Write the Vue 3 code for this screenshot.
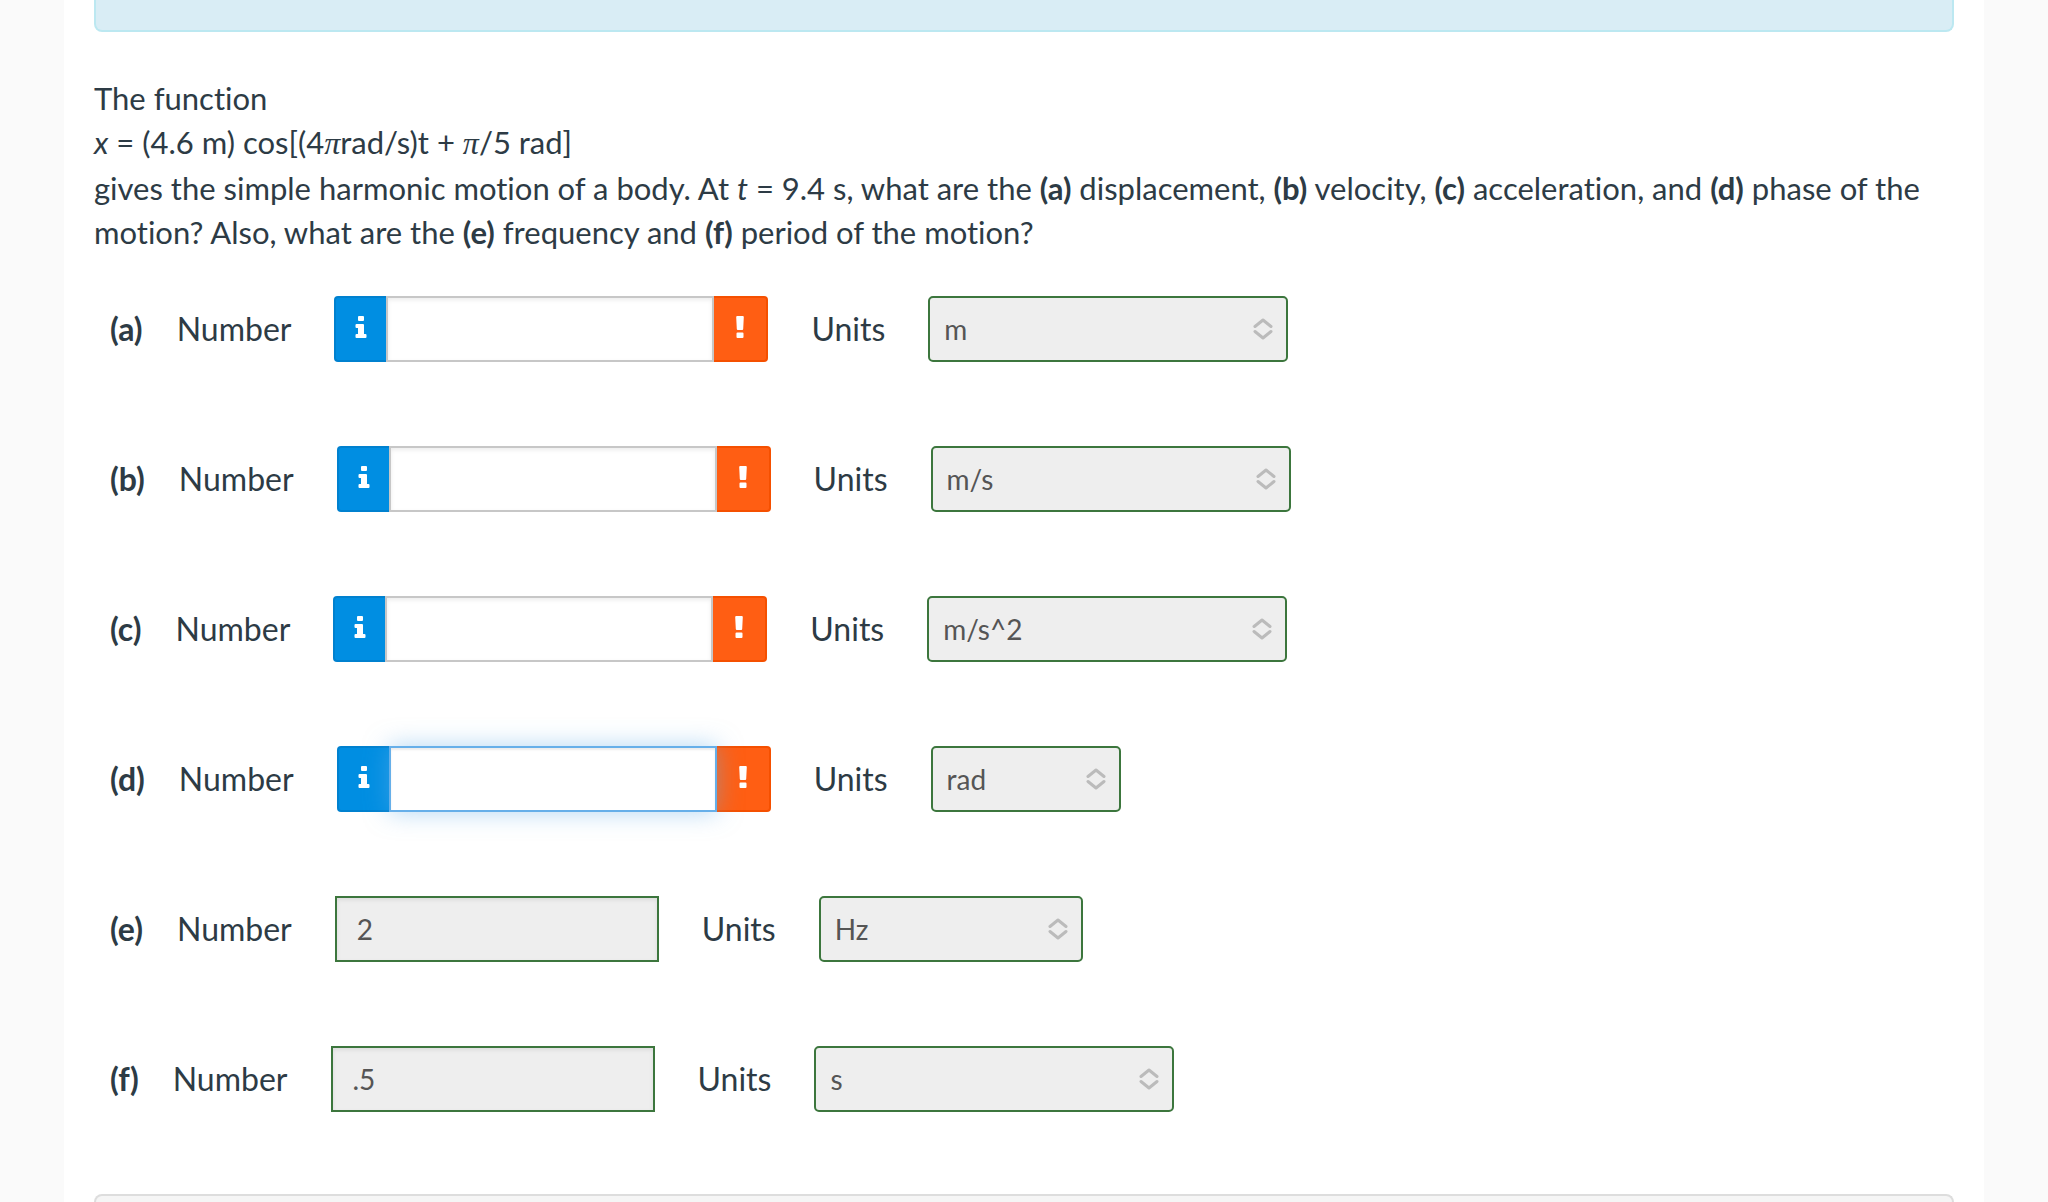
<script setup>
import { ref } from 'vue';

const rows=ref([
  { id:'a', value:'', unit:'m', size:'large', checked:false },
  { id:'b', value:'', unit:'m/s', size:'large', checked:false },
  { id:'c', value:'', unit:'m/s^2', size:'large', checked:false },
  { id:'d', value:'', unit:'rad', size:'small', checked:false },
  { id:'e', value:'2', unit:'Hz', size:'medium', checked:true },
  { id:'f', value:'.5', unit:'s', size:'large', checked:true }
])
const active=ref('d')
</script>
<template>
<main class="page">
  <div class="notice"></div>

  <section class="question">
    <p>The function</p>
    <p class="formula"><em>x</em> = (4.6 m) cos[(4<span class="pi">π</span>rad/s)t + <span class="pi">π</span>/5 rad]</p>
    <p>gives the simple harmonic motion of a body. At <em>t</em> = 9.4 s, what are the <b>(a)</b> displacement, <b>(b)</b> velocity, <b>(c)</b> acceleration, and <b>(d)</b> phase of the motion? Also, what are the <b>(e)</b> frequency and <b>(f)</b> period of the motion?</p>
  </section>

  <form class="answers" @submit.prevent>
    <div class="row" v-for="row in rows" :key="row.id">
      <b class="part">({{ row.id }})</b>
      <label :for="'number-'+row.id">Number</label>

      <input v-if="row.checked" class="number correct" type="text" :id="'number-'+row.id" v-model="row.value" disabled>
      <div v-else class="group">
        <button type="button" class="info" aria-label="Information">
          <svg width="12" height="22" viewBox="0 0 12 22">
            <path d="M4 0h4q1 0 1 1v3q0 1-1 1H4Q3 5 3 4V1q0-1 1-1zM1.500 8H8q1 0 1 1v9h1.500q1 0 1 1v2q0 1-1 1h-9q-1 0-1-1v-2q0-1 1-1H3v-6H1.500q-1 0-1-1V9q0-1 1-1z"/>
          </svg>
        </button>
        <input class="number" :class="{ active: active===row.id }" type="text" :id="'number-'+row.id" v-model="row.value" @focus="active=row.id">
        <button type="button" class="wrong" aria-label="Incorrect">
          <svg width="8" height="22" viewBox="0 0 8 22">
            <path d="M1.200 0h5.600q1 0 1 1l-.6 12q0 1-1 1H1.800q-1 0-1-1L.2 1q0-1 1-1zM1.500 16.500h5q1 0 1 1V21q0 1-1 1h-5q-1 0-1-1v-3.500q0-1 1-1z"/>
          </svg>
        </button>
      </div>

      <label :for="'units-'+row.id">Units</label>
      <div class="select" :class="row.size">
        <select :id="'units-'+row.id" v-model="row.unit" disabled>
          <option>{{ row.unit }}</option>
        </select>
        <svg class="arrows" width="20" height="22" viewBox="0 0 20 22">
          <path d="M2 8.500L10 2l8 6.500M2 13.500L10 20l8-6.500"/>
        </svg>
      </div>
    </div>
  </form>

  <div class="footer-box"></div>
</main>
</template>
<style>
body{
  margin: 0;
  background-color: #fafafa;
}
</style>
<style scoped>
.page{
  box-sizing: border-box;
  min-height: 100vh;
  margin: 0 64px;
  padding: 0 30px;
  display: flex;
  flex-direction: column;
  background-color: white;
  color: #2d3b45;
  font-family: Lato, "Liberation Sans", sans-serif;
  font-size: 32px;
  font-variant-ligatures: none;
}

.notice{
  height: 30px;
  background-color: #d9edf5;
  border: 2px solid #bce8f1;
  border-top: none;
  border-radius: 0 0 8px 8px;
}

.question{
  margin: 44px 0 42px;
  font-size: 31px;
  line-height: 44px;
}

.question p{
  margin: 0;
}

.question .formula{
  margin-bottom: 2px;
}

.pi{
  font-family: "Liberation Serif", serif;
  font-size: 32px;
  font-style: italic;
  line-height: 1;
}

.answers{
  display: flex;
  flex-direction: column;
  gap: 84px;
  padding: 0 16px;
}

.row{
  display: flex;
  align-items: center;
  gap: 43px;
  height: 66px;
}

.part, label{
  padding-bottom: 2px;
}

.part{
  margin-right: -9px;
}

.group{
  display: flex;
  height: 66px;
}

.number{
  box-sizing: border-box;
  width: 328px;
  height: 66px;
  margin: 0;
  padding: 0 20px;
  border: 2px solid #c7c7c7;
  border-radius: 0;
  outline: none;
  background-color: white;
  box-shadow: inset 0 2px 4px rgba(0, 0, 0, 0.08);
  color: #555;
  font-family: inherit;
  font-size: 28px;
}

.number.correct{
  width: 324px;
  background-color: #eee;
  border-color: #3c763d;
}

.number.active{
  position: relative;
  border-color: #66afe9;
  box-shadow: inset 0 2px 2px rgba(0, 0, 0, 0.08), 0 0 24px rgba(102, 175, 233, 0.5);
}

.info, .wrong{
  box-sizing: border-box;
  margin: 0;
  padding: 0 0 4px;
  display: flex;
  align-items: center;
  justify-content: center;
  cursor: pointer;
}

.info{
  width: 52px;
  background-color: #008ee2;
  border: 2px solid #0081cf;
  border-right: none;
  border-radius: 4px 0 0 4px;
}

.wrong{
  width: 54px;
  background-color: #ff5e13;
  border: 2px solid #f55000;
  border-left: none;
  border-radius: 0 4px 4px 0;
}

.info svg, .wrong svg{
  fill: white;
}

.select{
  position: relative;
}

.small{
  width: 190px;
}

.medium{
  width: 264px;
}

.large{
  width: 360px;
}

select{
  box-sizing: border-box;
  display: block;
  width: 100%;
  height: 66px;
  margin: 0;
  padding: 0 40px 0 14px;
  appearance: none;
  background-color: #eee;
  border: 2px solid #3c763d;
  border-radius: 5px;
  color: #555;
  opacity: 1;
  font-family: inherit;
  font-size: 28px;
}

.arrows{
  position: absolute;
  top: 22px;
  right: 15px;
  fill: none;
  stroke: #bbb;
  stroke-width: 3;
  stroke-linecap: round;
  stroke-linejoin: round;
  pointer-events: none;
}

.footer-box{
  flex: 1;
  min-height: 6px;
  margin-top: 82px;
  background-color: #f5f5f5;
  border: 2px solid #ddd;
  border-bottom: none;
  border-radius: 8px 8px 0 0;
}
</style>
